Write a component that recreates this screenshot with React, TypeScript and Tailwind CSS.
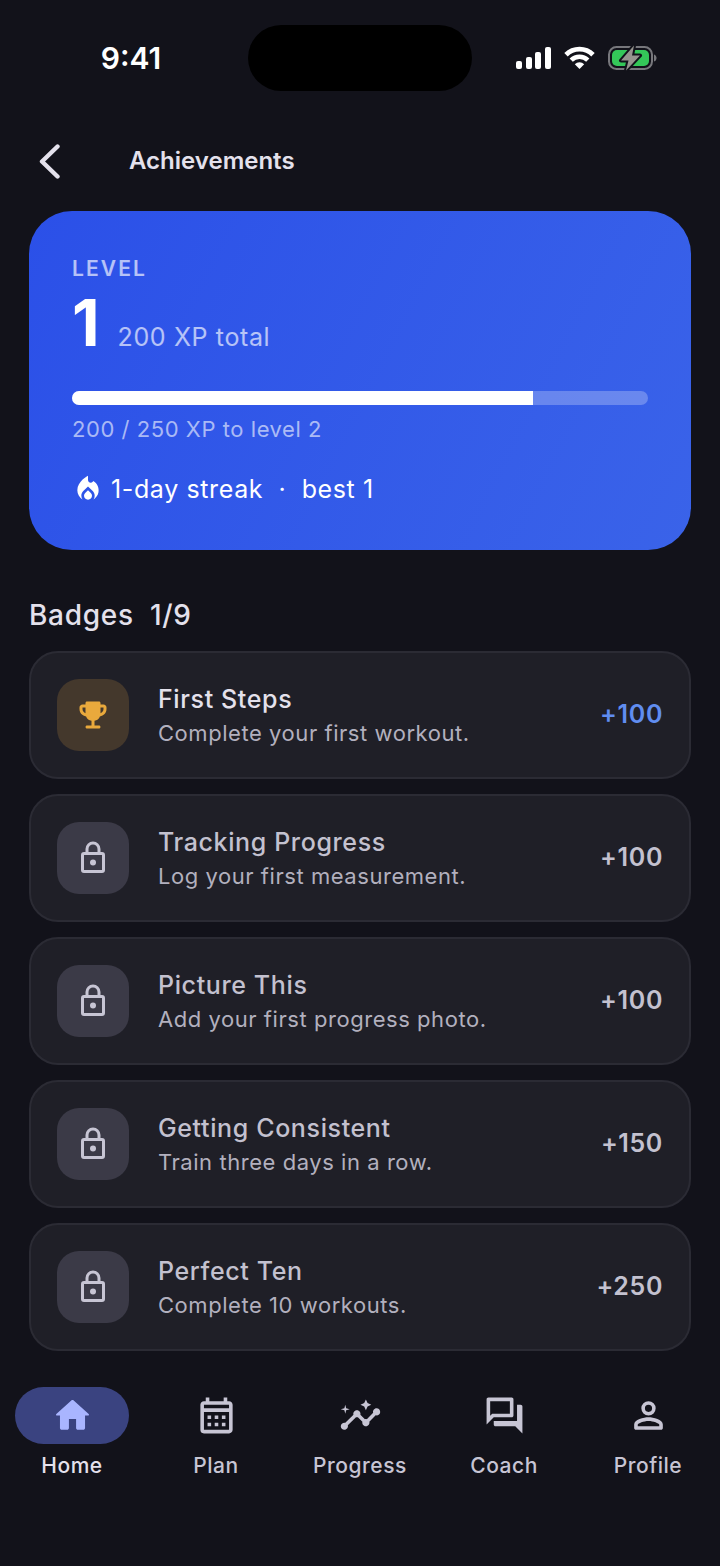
import type { ReactNode } from "react";
import {
  MdInsights,
  MdLocalFireDepartment,
  MdOutlineCalendarMonth,
  MdOutlineForum,
} from "react-icons/md";

const badges = [
  { title: "First Steps", text: "Complete your first workout.", xp: 100, unlocked: true },
  { title: "Tracking Progress", text: "Log your first measurement.", xp: 100, unlocked: false },
  { title: "Picture This", text: "Add your first progress photo.", xp: 100, unlocked: false },
  { title: "Getting Consistent", text: "Train three days in a row.", xp: 150, unlocked: false },
  { title: "Perfect Ten", text: "Complete 10 workouts.", xp: 250, unlocked: false },
];

const xp = { current: 200, goal: 250 };

function HomeIcon() {
  return (
    <svg className="size-[43px]" viewBox="0 0 24 24" fill="currentColor" aria-hidden="true">
      <path d="M10 19v-5h4v5c0 .55.45 1 1 1h3c.55 0 1-.45 1-1v-7h1.7c.46 0 .68-.57.33-.87L12.67 3.6c-.38-.34-.96-.34-1.34 0l-8.36 7.53c-.34.3-.13.87.33.87H5v7c0 .55.45 1 1 1h3c.55 0 1-.45 1-1z" />
    </svg>
  );
}

function ProfileIcon() {
  return (
    <svg className="size-[43px]" viewBox="0 0 24 24" fill="currentColor" aria-hidden="true">
      <path
        fillRule="evenodd"
        d="M12 6a2 2 0 1 1 0 4 2 2 0 0 1 0-4zm0-2a4 4 0 1 0 0 8 4 4 0 0 0 0-8zm0 11c2.7 0 5.8 1.29 6 2.01V18H6v-.99c.2-.72 3.3-2.01 6-2.01zm0-2c-2.67 0-8 1.34-8 4v2c0 .55.45 1 1 1h14c.55 0 1-.45 1-1v-2c0-2.66-5.33-4-8-4z"
      />
    </svg>
  );
}

function TrophyIcon() {
  return (
    <svg className="size-9" viewBox="0 0 24 24" fill="currentColor" aria-hidden="true">
      <path
        fillRule="evenodd"
        d="M19 5h-2V4c0-.55-.45-1-1-1H8c-.55 0-1 .45-1 1v1H5c-1.1 0-2 .9-2 2v1c0 2.55 1.92 4.63 4.39 4.94A5.01 5.01 0 0 0 11 15.9V19H8c-.55 0-1 .45-1 1s.45 1 1 1h8c.55 0 1-.45 1-1s-.45-1-1-1h-3v-3.1a5.01 5.01 0 0 0 3.61-2.96C19.08 12.63 21 10.55 21 8V7c0-1.1-.9-2-2-2zM5 8V7h2v3.82C5.84 10.4 5 9.3 5 8zm14 0c0 1.3-.84 2.4-2 2.82V7h2v1z"
      />
    </svg>
  );
}

function LockIcon() {
  return (
    <svg className="size-9" viewBox="0 0 24 24" fill="none" aria-hidden="true">
      <rect x="5" y="9" width="14" height="12" rx="1" stroke="currentColor" strokeWidth="2" />
      <path d="M8 9V6a4 4 0 0 1 8 0v3" stroke="currentColor" strokeWidth="2" />
      <circle cx="12" cy="15" r="2" fill="currentColor" />
    </svg>
  );
}

function StatusIcons() {
  return (
    <div className="flex items-center gap-3">
      <svg className="h-6 w-9" viewBox="0 0 36 24" fill="white" aria-hidden="true">
        <rect x="0" y="15" width="6" height="8" rx="2" />
        <rect x="10" y="11" width="6" height="12" rx="2" />
        <rect x="19" y="6" width="6" height="17" rx="2" />
        <rect x="29" y="1" width="6" height="22" rx="2" />
      </svg>
      <svg className="h-6 w-8" viewBox="0 0 32 24" fill="none" stroke="white" aria-hidden="true">
        <path d="M2 8.8a19 19 0 0 1 27 0" strokeWidth="4.8" />
        <path d="M7.2 14.2a11.7 11.7 0 0 1 16.6 0" strokeWidth="4.6" />
        <path d="M10.8 18.2a6.8 6.8 0 0 1 9.4 0L15.5 23z" fill="white" stroke="none" />
      </svg>
      <svg className="h-7 w-[50px]" viewBox="0 0 50 28" aria-hidden="true">
        <rect x="1" y="3" width="43" height="22" rx="7.5" fill="none" stroke="#77777c" strokeWidth="2" />
        <path d="M46 10.5c3.4 1 3.4 6 0 7z" fill="#77777c" />
        <rect x="4" y="6" width="37" height="16" rx="5" fill="#34c759" />
        <path
          d="M26 1.5 13 16.5h7.5L18 26.5 32 11.5h-8z"
          fill="#96948f"
          stroke="#12121a"
          strokeWidth="4"
          strokeLinejoin="round"
          paintOrder="stroke"
        />
      </svg>
    </div>
  );
}

const tabs: { name: string; icon: ReactNode }[] = [
  { name: "Home", icon: <HomeIcon /> },
  { name: "Plan", icon: <MdOutlineCalendarMonth className="size-[43px]" /> },
  { name: "Progress", icon: <MdInsights className="size-[43px]" /> },
  { name: "Coach", icon: <MdOutlineForum className="size-[43px]" /> },
  { name: "Profile", icon: <ProfileIcon /> },
];

export default function App() {
  const active = "Home";

  return (
    <div className="flex min-h-screen flex-col bg-[#12121a] font-['Inter',sans-serif] text-[#e4e1ec]">
      <div className="grid h-[116px] grid-cols-[1fr_224px_1fr] items-center">
        <span className="pl-[14px] text-center text-[30px] font-semibold text-white">9:41</span>
        <div className="h-[66px] rounded-full bg-black" />
        <div className="flex justify-end pr-[62px]">
          <StatusIcons />
        </div>
      </div>

      <header className="flex h-[90px] items-center px-[29px]">
        <button type="button" aria-label="Back" className="flex w-[100px] items-center pl-2">
          <svg className="h-9 w-6" viewBox="0 0 24 36" fill="none" aria-hidden="true">
            <path
              d="M20.5 3.5 5 18.5l15.5 15"
              stroke="currentColor"
              strokeWidth="4.4"
              strokeLinecap="round"
              strokeLinejoin="round"
            />
          </svg>
        </button>
        <h1 className="text-[24px] font-semibold">Achievements</h1>
      </header>

      <main className="flex-1 px-[29px] pt-[5px]">
        <section className="rounded-[43px] bg-linear-[117deg] from-[#2b50e8] to-[#3a63e9] p-[43px]">
          <h2 className="text-[21px] leading-[30px] font-semibold tracking-widest text-white/65">LEVEL</h2>
          <div className="mt-[2px] flex items-baseline gap-[18px]">
            <span className="text-[64px] leading-[74px] font-bold text-white">1</span>
            <span className="text-[25px] tracking-wide text-white/65">{xp.current} XP total</span>
          </div>
          <div className="mt-[31px] h-[14px] overflow-hidden rounded-full bg-white/25">
            <div className="h-full bg-white" style={{ width: `${(xp.current / xp.goal) * 100}%` }} />
          </div>
          <p className="mt-2 text-[22px] leading-8 tracking-wide text-white/60">
            {xp.current} / {xp.goal} XP to level 2
          </p>
          <div className="mt-[26px] flex items-center gap-[7px] text-white">
            <MdLocalFireDepartment className="size-8" />
            <p className="text-[25px] leading-9 tracking-wide whitespace-pre">{"1-day streak  ·  best 1"}</p>
          </div>
        </section>

        <h2 className="mt-[45px] text-[28px] leading-10 font-medium tracking-wide whitespace-pre">
          {"Badges  1/9"}
        </h2>

        <ul className="mt-4 flex flex-col gap-[15px]">
          {badges.map((badge) => (
            <li
              key={badge.title}
              className="flex items-center rounded-[29px] border-2 border-[#2b2b34] bg-[#1f1f27] p-[26px]"
            >
              <div
                className={`flex size-[72px] items-center justify-center rounded-[22px] ${
                  badge.unlocked ? "bg-[#44382c] text-[#e9a93c]" : "bg-[#3b3a47] text-[#c7c5d4]"
                }`}
              >
                {badge.unlocked ? <TrophyIcon /> : <LockIcon />}
              </div>
              <div className="ml-[29px] flex-1">
                <h3
                  className={`text-[25px] leading-9 font-medium tracking-wide ${
                    badge.unlocked ? "text-[#e4e1ec]" : "text-[#c3c1cf]"
                  }`}
                >
                  {badge.title}
                </h3>
                <p className="text-[22px] leading-8 tracking-wide text-[#b2b0be]">{badge.text}</p>
              </div>
              <span
                className={`text-[25px] font-semibold tracking-wide ${
                  badge.unlocked ? "text-[#608df0]" : "text-[#c3c1cf]"
                }`}
              >
                +{badge.xp}
              </span>
            </li>
          ))}
        </ul>
      </main>

      <nav className="mt-9 grid grid-cols-5 pb-[85px]">
        {tabs.map((tab) => (
          <a
            key={tab.name}
            href={`#${tab.name.toLowerCase()}`}
            aria-current={tab.name === active ? "page" : undefined}
            className={`flex flex-col items-center gap-1 ${
              tab.name === active ? "text-[#e4e1ec]" : "text-[#c7c5d4]"
            }`}
          >
            <span
              className={`flex h-[57px] w-[114px] items-center justify-center rounded-full ${
                tab.name === active ? "bg-[#3a4380] text-[#a9b5ff]" : ""
              }`}
            >
              {tab.icon}
            </span>
            <span className="text-[21px] leading-9 font-medium tracking-wide">{tab.name}</span>
          </a>
        ))}
      </nav>
    </div>
  );
}
